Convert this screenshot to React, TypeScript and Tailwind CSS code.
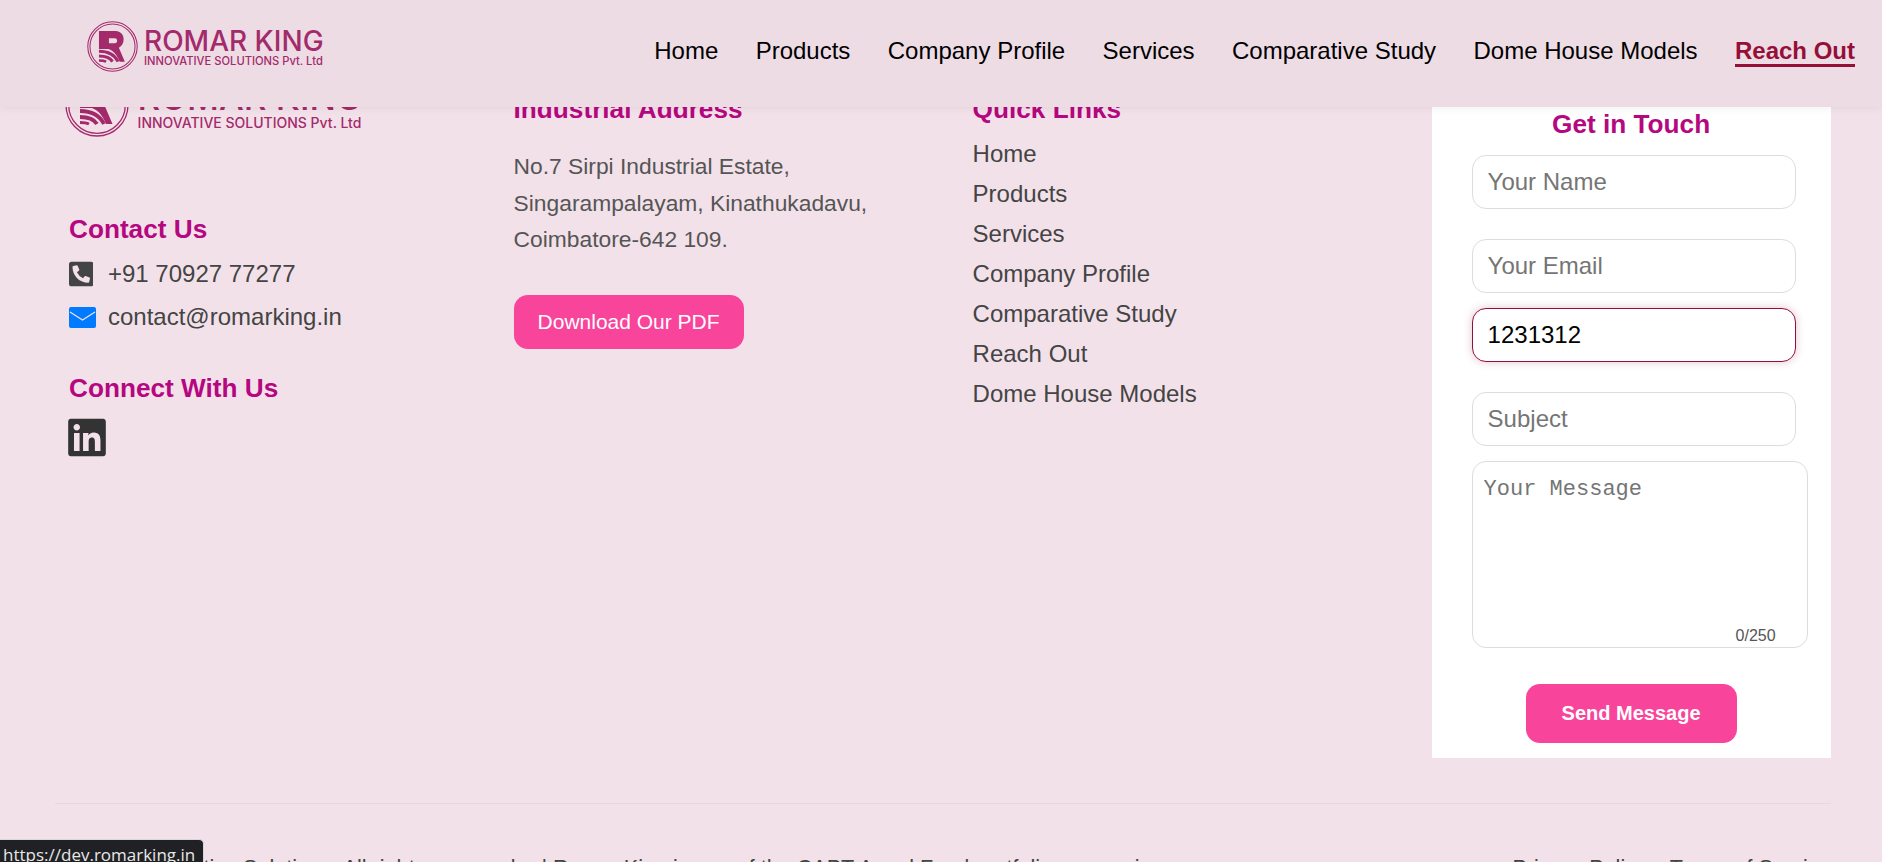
import React from "react";
import { FaLinkedin, FaPhoneSquareAlt } from "react-icons/fa";

const navLinks = ["Home", "Products", "Company Profile", "Services", "Comparative Study", "Dome House Models"];
const quickLinks = ["Home", "Products", "Services", "Company Profile", "Comparative Study", "Reach Out", "Dome House Models"];

const LogoMark: React.FC<{ className: string }> = ({ className }) => (
  <svg viewBox="0 0 64 64" className={className} fill="none">
    <circle cx="32" cy="32" r="31" stroke="#a32a6b" strokeWidth="1.3" />
    <circle cx="32" cy="32" r="28.3" stroke="#a32a6b" strokeWidth="1.3" />
    <path
      fillRule="evenodd"
      fill="#a32a6b"
      d="M15 12.5H36C42 12.5 46 17 46 23C46 28 43.5 32 40 33.5L47.5 51H41C38 43 33 37 27 35H15ZM27.5 21.5V28H35C36.8 28 37.8 26.5 37.8 24.8C37.8 23 36.8 21.5 35 21.5Z"
    />
    <path d="M15 38C27 38 35 43 39 51" stroke="#a32a6b" strokeWidth="3.8" />
    <path d="M15 44C23 44 29 46 32 51" stroke="#a32a6b" strokeWidth="3.8" />
    <path d="M15 49.5C19 49.5 22 50 24 51" stroke="#a32a6b" strokeWidth="3" />
  </svg>
);

const Field: React.FC<{ placeholder: string; className: string }> = ({ placeholder, className }) => (
  <input
    placeholder={placeholder}
    className={`h-[54px] w-[324.5px] rounded-[14px] border border-[#ddd] bg-white px-[15px] text-[24px] outline-none placeholder:text-[#757575] ${className}`}
  />
);

export default function App() {
  return (
    <div className="relative h-[862px] overflow-hidden bg-[#f3e1ea] font-['Liberation_Sans',Arial,sans-serif]">
      {/* sticky header sits over the scrolled footer */}
      <header className="absolute inset-x-0 top-0 z-10 flex h-[107px] items-start justify-between bg-[#eedce5] pl-[87px] pr-[27px] shadow-[0_2px_8px_rgba(0,0,0,0.05)]">
        <div className="mt-[21px] flex items-start gap-[6px]">
          <LogoMark className="h-[51px] w-[51px]" />
          <div className="text-[#a32a6b] font-['Inter',sans-serif]">
            <div className="mt-[5px] whitespace-nowrap text-[28px] leading-[30px] font-medium">ROMAR KING</div>
            <div className="mt-[-1px] whitespace-nowrap text-[11.2px] leading-[13px] font-medium">INNOVATIVE SOLUTIONS Pvt. Ltd</div>
          </div>
        </div>
        <nav className="mt-[37px] flex gap-[37.4px] text-[24px] leading-[28px] text-black">
          {navLinks.map((link) => (
            <a key={link}>{link}</a>
          ))}
          <a className="h-[30px] border-b-[3px] border-[#951039] font-bold text-[#951039]">Reach Out</a>
        </nav>
      </header>

      <footer className="pl-[54.6px] pr-[51.4px] pt-[70px]">
        <div className="grid h-[688px] grid-cols-4 gap-[60px]">
          <div className="pl-[14.4px]">
            <div className="ml-[-4.4px] mt-[3px] flex items-start gap-[9px]">
              <LogoMark className="h-[64px] w-[64px]" />
              <div className="text-[#a32a6b] font-['Inter',sans-serif]">
                <div className="mt-[6px] whitespace-nowrap text-[35px] leading-[37px] font-medium">ROMAR KING</div>
                <div className="mt-[-1px] whitespace-nowrap text-[14px] leading-[16px] font-medium">INNOVATIVE SOLUTIONS Pvt. Ltd</div>
              </div>
            </div>
            <h3 className="mt-[78px] text-[26.2px] leading-[28px] font-bold text-[#b5077f]">Contact Us</h3>
            <div className="mt-[17px] flex h-[28px] items-center gap-[14.5px] text-[24px] text-[#444]">
              <FaPhoneSquareAlt className="h-[28px] w-[24.5px] text-[#444]" />
              <span>+91 70927 77277</span>
            </div>
            <div className="mt-[15px] flex h-[28px] items-center gap-[12px] text-[24px] text-[#444]">
              <svg viewBox="0 0 27 21" className="h-[21px] w-[27px]">
                <rect width="27" height="21" rx="2" fill="#007bff" />
                <path d="M1 5L13.5 13L26 5" stroke="#f3e1ea" strokeWidth="1.2" fill="none" />
              </svg>
              <span>contact@romarking.in</span>
            </div>
            <h3 className="mt-[43px] text-[26.2px] leading-[28px] font-bold text-[#b5077f]">Connect With Us</h3>
            <FaLinkedin className="ml-[-0.6px] mt-[14px] h-[43px] w-[38px] text-[#333]" />
          </div>

          <div className="pt-[25px]">
            <h3 className="text-[26.2px] leading-[28px] font-bold text-[#b5077f]">Industrial Address</h3>
            <p className="mt-[25px] text-[22.8px] leading-[36.6px] text-[#555]">
              No.7 Sirpi Industrial Estate,
              <br />
              Singarampalayam, Kinathukadavu,
              <br />
              Coimbatore-642 109.
            </p>
            <a className="mt-[37px] flex h-[54px] w-[230px] items-center justify-center rounded-[14px] bg-[#f8449b] text-[21px] text-white">
              Download Our PDF
            </a>
          </div>

          <div className="pt-[25px]">
            <h3 className="text-[26.2px] leading-[28px] font-bold text-[#b5077f]">Quick Links</h3>
            <ul className="mt-[11px] flex flex-col text-[24px] leading-[40px] text-[#444]">
              {quickLinks.map((link) => (
                <li key={link}>{link}</li>
              ))}
            </ul>
          </div>

          <div className="flex flex-col bg-white pl-[40px] pt-[40px]">
            <h3 className="ml-[-40px] text-center text-[26.2px] leading-[28px] font-bold text-[#b5077f]">Get in Touch</h3>
            <Field placeholder="Your Name" className="mt-[17px]" />
            <Field placeholder="Your Email" className="mt-[30px]" />
            <input
              readOnly
              value="1231312"
              className="mt-[15px] h-[54px] w-[324.5px] rounded-[14px] border border-[#951039] bg-white px-[15px] text-[24px] text-black shadow-[0_0_8px_rgba(149,16,57,0.25)] outline-none"
            />
            <Field placeholder="Subject" className="mt-[30px]" />
            <div className="relative mt-[15px] h-[187px] w-[336px]">
              <textarea
                placeholder="Your Message"
                className="h-full w-full resize-none rounded-[14px] border border-[#ddd] bg-white px-[11px] py-[15px] font-['Liberation_Mono',monospace] text-[22px] leading-[26px] outline-none placeholder:text-[#757575]"
              />
              <span className="absolute bottom-0 right-[32px] text-[16px] text-[#555]">0/250</span>
            </div>
            <button className="ml-[54px] mt-[36px] h-[59px] w-[211px] rounded-[14px] bg-[#f8449b] pb-[2px] text-[20px] font-bold text-white">
              Send Message
            </button>
          </div>
        </div>

        <div className="mt-[45px] border-t border-[#e6d8df] pt-[52px]">
          <div className="flex justify-between whitespace-nowrap text-[21.6px] leading-[24px] text-[#444]">
            <span className="ml-[-112px]">
              © 2025 Romar King Innovative Solutions. All rights reserved. <span className="ml-[14px]">|</span> Romar King is one of the CAPT Angel Fund portfolio companies
            </span>
            <span className="flex gap-[23px]">
              <a>Privacy Policy</a>
              <a>Terms of Service</a>
            </span>
          </div>
        </div>
      </footer>

      {/* browser link preview bubble */}
      <div className="absolute bottom-0 left-0 z-20 h-[23px] w-[204px] overflow-hidden rounded-tr-[5px] border-r border-t border-[#d8d8d8] bg-[#202124] pl-[3px] font-['Open_Sans',sans-serif] text-[17px] leading-[30px] whitespace-nowrap text-[#e8e8e8]">
        https://dev.romarking.in
      </div>
    </div>
  );
}
